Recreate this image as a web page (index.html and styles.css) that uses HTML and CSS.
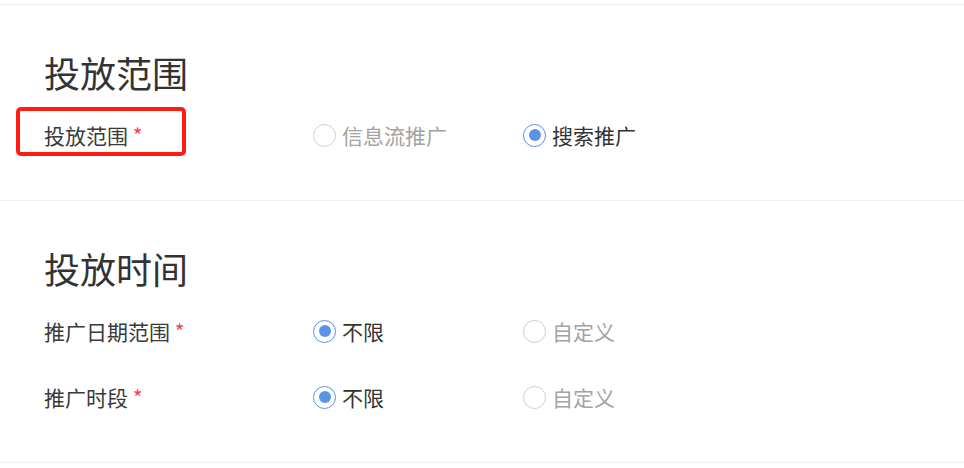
FILE: index.html
```html
<!DOCTYPE html>
<html lang="zh-CN">
<head>
<meta charset="utf-8">
<title>投放设置</title>
<link rel="stylesheet" href="styles.css">
</head>
<body>
<div class="page">
  <section class="section">
    <h2 class="title">投放范围</h2>
    <div class="row">
      <div class="label">投放范围 <span class="req">*</span><span class="mark"></span></div>
      <label class="radio disabled"><span class="dot"></span>信息流推广</label>
      <label class="radio checked"><span class="dot"></span>搜索推广</label>
    </div>
  </section>
  <section class="section">
    <h2 class="title">投放时间</h2>
    <div class="row">
      <div class="label">推广日期范围 <span class="req">*</span></div>
      <label class="radio checked"><span class="dot"></span>不限</label>
      <label class="radio disabled"><span class="dot"></span>自定义</label>
    </div>
    <div class="row">
      <div class="label">推广时段 <span class="req">*</span></div>
      <label class="radio checked"><span class="dot"></span>不限</label>
      <label class="radio disabled"><span class="dot"></span>自定义</label>
    </div>
  </section>
  <div class="end"></div>
</div>
</body>
</html>
```

FILE: styles.css
```css
html, body {
  margin: 0;
  padding: 0;
  background: #ffffff;
}
body {
  font-family: "Noto Sans CJK SC", "Noto Sans", sans-serif;
  color: #333333;
}
.page {
  padding-top: 4px;
}
.section {
  border-top: 1px solid #f0f0f0;
  padding: 0 44px 32px;
}
.end {
  border-top: 1px solid #f0f0f0;
}
.title {
  margin: 42px 0 5px;
  font-size: 36px;
  line-height: 50px;
  font-weight: 400;
  color: #333333;
}
.row {
  display: grid;
  grid-template-columns: 269px 210px 210px;
  align-items: center;
  height: 66px;
  font-size: 21px;
  line-height: 30px;
}
.label {
  position: relative;
  color: #3a3a3a;
  white-space: nowrap;
}
.req {
  color: #f04848;
}
.mark {
  position: absolute;
  left: -28px;
  top: -13px;
  width: 170px;
  height: 49px;
  box-sizing: border-box;
  border: 4px solid #ff1d12;
  border-radius: 5px;
}
.radio {
  display: flex;
  align-items: center;
  gap: 6px;
  white-space: nowrap;
}
.dot {
  box-sizing: border-box;
  width: 23px;
  height: 23px;
  border-radius: 50%;
  border: 1px solid #d0d0d0;
  display: flex;
  align-items: center;
  justify-content: center;
  flex: none;
}
.radio.disabled {
  color: #a3a3a3;
}
.radio.checked .dot {
  border-color: #5b8fe6;
}
.radio.checked .dot::after {
  content: "";
  width: 12px;
  height: 12px;
  border-radius: 50%;
  background: #5b93e6;
}
```
